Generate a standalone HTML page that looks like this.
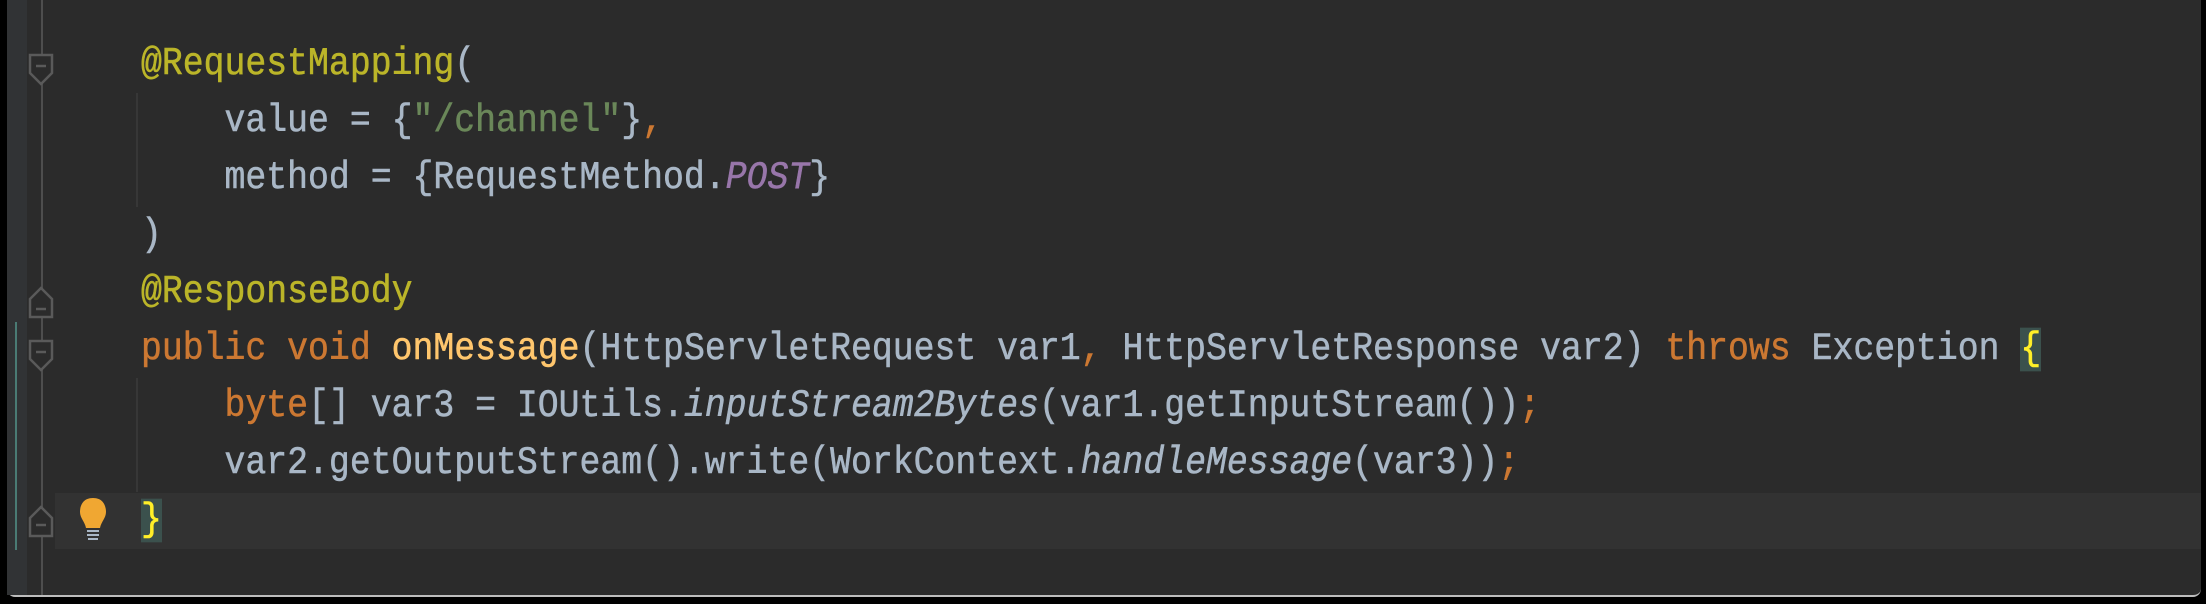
<!DOCTYPE html>
<html><head><meta charset="utf-8"><style>
html,body{margin:0;padding:0;background:#000;}
body{width:2206px;height:604px;position:relative;overflow:hidden;}
#panel{position:absolute;left:7px;top:0;width:2194px;height:595px;background:#2b2b2b;border-radius:0 0 8px 8px;border-bottom:2px solid #bdbdbd;}
#gutter{position:absolute;left:7px;top:0;width:20px;height:595px;background:#313335;}
.ln{position:absolute;left:141px;height:57px;line-height:57px;font-family:"Liberation Mono",monospace;font-size:34.8px;color:#a9b7c6;white-space:pre;transform:scaleY(1.12);transform-origin:0 50%;-webkit-text-stroke:0.5px currentColor;}
.an{color:#bbb529}.kw{color:#cc7832}.st{color:#6a8759}.fn{color:#ffc66d}.it{font-style:italic}.pp{color:#9876aa;font-style:italic}
.br{color:#ffef28;background:#3b514d;}
#cur{position:absolute;left:55px;top:493px;width:2146px;height:56px;background:#323232;}
.guide{position:absolute;width:2px;background:#373737;}
</style></head><body>
<div id="panel"></div>
<div id="gutter"></div>
<div id="cur"></div>
<div style="position:absolute;left:41px;top:0;width:2px;height:595px;background:#4e4e4e"></div>
<div style="position:absolute;left:15px;top:322px;width:2px;height:228px;background:#4a7b74"></div>
<div class="guide" style="left:136px;top:93px;height:114px"></div>
<div class="guide" style="left:136px;top:378px;height:114px"></div>
<svg style="position:absolute;left:0;top:0" width="120" height="604">
<g fill="#2b2b2b" stroke="#5a5a5a" stroke-width="2.5">
<path d="M30 55 H52 V73 L41 84 L30 73 Z"/>
<path d="M30 317 H52 V299 L41 288 L30 299 Z"/>
<path d="M30 341 H52 V359 L41 370 L30 359 Z"/>
<path d="M30 536 H52 V518 L41 507 L30 518 Z"/>
</g>
<g stroke="#5a5a5a" stroke-width="2.5"><path d="M36 66H46M36 309H46M36 352H46M36 525H46"/></g>
<path d="M93 498 C82 498 80 507 80 512 C80 518 85 522 86 528 H100 C101 522 106 518 106 512 C106 507 104 498 93 498 Z" fill="#f0a732"/>
<path d="M87 531H99M87 535H99M88 539H98" stroke="#a9b7c6" stroke-width="2"/>
</svg>
<div class="ln" style="top:36px"><span class="an">@RequestMapping</span>(</div>
<div class="ln" style="top:93px">    value = {<span class="st">"/channel"</span>}<span class="kw">,</span></div>
<div class="ln" style="top:150px">    method = {RequestMethod.<span class="pp">POST</span>}</div>
<div class="ln" style="top:207px">)</div>
<div class="ln" style="top:264px"><span class="an">@ResponseBody</span></div>
<div class="ln" style="top:321px"><span class="kw">public void </span><span class="fn">onMessage</span>(HttpServletRequest var1<span class="kw">, </span>HttpServletResponse var2) <span class="kw">throws </span>Exception <span class="br">{</span></div>
<div class="ln" style="top:378px">    <span class="kw">byte</span>[] var3 = IOUtils.<span class="it">inputStream2Bytes</span>(var1.getInputStream())<span class="kw">;</span></div>
<div class="ln" style="top:435px">    var2.getOutputStream().write(WorkContext.<span class="it">handleMessage</span>(var3))<span class="kw">;</span></div>
<div class="ln" style="top:492px"><span class="br">}</span></div>
</body></html>
